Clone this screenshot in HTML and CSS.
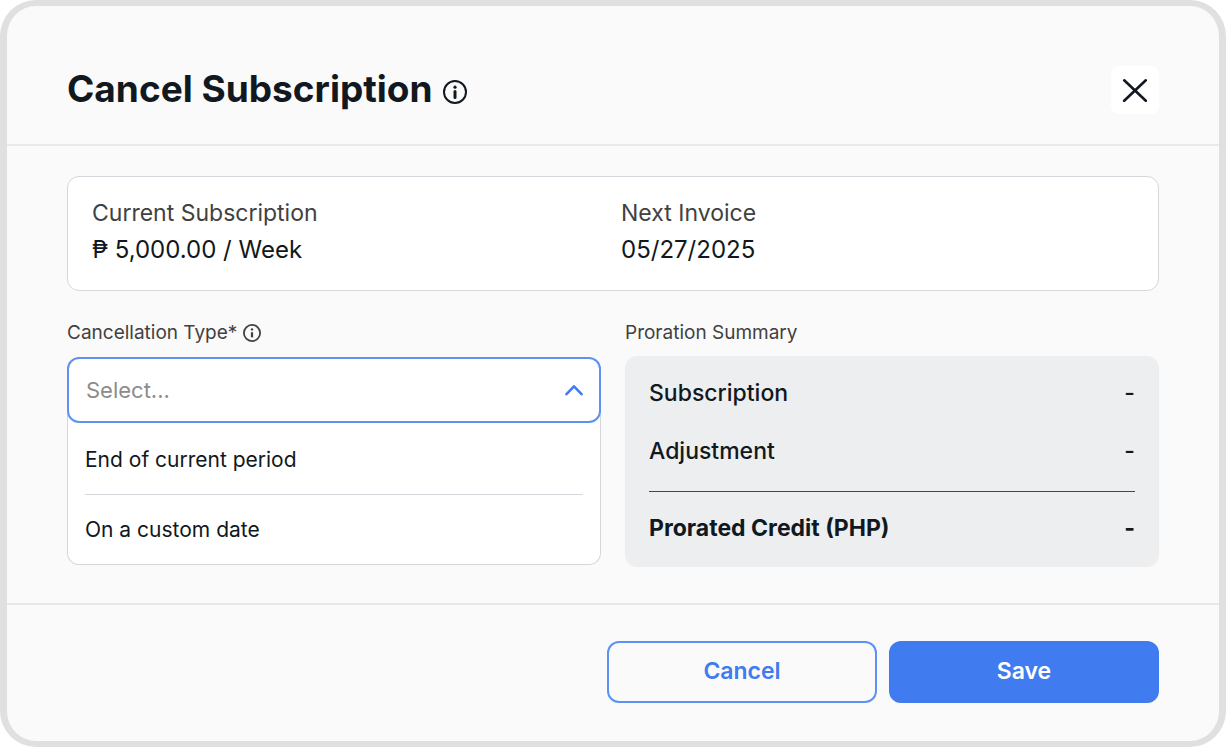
FILE: index.html
```html
<!DOCTYPE html>
<html lang="en">
<head>
<meta charset="utf-8">
<meta name="viewport" content="width=device-width, initial-scale=1">
<title>Cancel Subscription</title>
<link rel="stylesheet" href="styles.css">
</head>
<body>
<main class="dialog" role="dialog" aria-labelledby="dialog-title">
  <header class="dialog-header">
    <div class="title-group">
      <h1 class="title" id="dialog-title">Cancel Subscription</h1>
      <svg class="info-large" viewBox="0 0 24 24" aria-hidden="true"><circle cx="12" cy="12" r="11" fill="none" stroke="currentColor" stroke-width="2"/><circle cx="12" cy="7.2" r="1.6" fill="currentColor"/><path d="M12 11.6v6" stroke="currentColor" stroke-width="3" stroke-linecap="round"/></svg>
    </div>
    <button class="close" type="button" aria-label="Close">
      <svg class="close-icon" viewBox="0 0 24 24" aria-hidden="true"><path d="M1.2 2.3l21.6 20.5M22.8 2.3l-21.6 20.5" fill="none" stroke="currentColor" stroke-width="2.6" stroke-linecap="round"/></svg>
    </button>
  </header>

  <form class="dialog-form">
    <div class="dialog-body">
      <dl class="overview">
        <div class="overview-item">
          <dt class="overview-label">Current Subscription</dt>
          <dd class="overview-value">₱ 5,000.00 / Week</dd>
        </div>
        <div class="overview-item">
          <dt class="overview-label">Next Invoice</dt>
          <dd class="overview-value">05/27/2025</dd>
        </div>
      </dl>

      <div class="columns">
        <section class="column">
          <div class="label-row">
            <label for="cancel-type">Cancellation Type*</label>
            <svg class="info-small" viewBox="0 0 24 24" aria-hidden="true"><circle cx="12" cy="12" r="10.8" fill="none" stroke="currentColor" stroke-width="2.4"/><circle cx="12" cy="7.2" r="1.6" fill="currentColor"/><path d="M12 11v6.8" stroke="currentColor" stroke-width="3"/></svg>
          </div>
          <div class="dropdown">
            <div class="select-wrap">
              <select class="select" id="cancel-type">
                <option>Select...</option>
                <option>End of current period</option>
                <option>On a custom date</option>
              </select>
              <svg class="chevron" viewBox="0 0 18 12" aria-hidden="true"><path d="M1.5 10.2L9 2.4l7.5 7.8" fill="none" stroke="currentColor" stroke-width="2.6" stroke-linecap="round" stroke-linejoin="round"/></svg>
            </div>
            <ul class="menu">
              <li class="menu-item"><button class="menu-button" type="button">End of current period</button></li>
              <li class="menu-item"><button class="menu-button" type="button">On a custom date</button></li>
            </ul>
          </div>
        </section>

        <section class="column">
          <h2 class="label-row">Proration Summary</h2>
          <dl class="summary">
            <div class="summary-row"><dt>Subscription</dt><dd>-</dd></div>
            <div class="summary-row"><dt>Adjustment</dt><dd>-</dd></div>
            <div class="summary-row summary-total"><dt>Prorated Credit (PHP)</dt><dd>-</dd></div>
          </dl>
        </section>
      </div>
    </div>

    <footer class="dialog-footer">
      <button class="button button-outline" type="button">Cancel</button>
      <button class="button button-primary" type="button">Save</button>
    </footer>
  </form>
</main>
</body>
</html>
```
FILE: styles.css
```css
* {
  box-sizing: border-box;
}

body {
  margin: 0;
  background: #fff;
  color: #111820;
  font-family: Inter, "Liberation Sans", sans-serif;
}

h1, h2, dl, dd, ul {
  margin: 0;
  padding: 0;
}

button, select {
  font-family: inherit;
}

.dialog {
  display: flex;
  flex-direction: column;
  min-height: 100vh;
  border: solid #e0e0e0;
  border-width: 6px 7px;
  border-radius: 36px;
  background: #fafafa;
}

.dialog-header {
  display: flex;
  align-items: center;
  justify-content: space-between;
  padding: 60px 60px 30px;
  border-bottom: 2px solid #e7eaed;
}

.title-group {
  display: flex;
  align-items: center;
  gap: 10px;
}

.title {
  padding-bottom: 2px;
  font-size: 37px;
  line-height: 46px;
  font-weight: 650;
}

.info-large {
  width: 24px;
  height: 24px;
  margin-top: 3px;
}

.close {
  display: grid;
  place-items: center;
  width: 48px;
  height: 48px;
  padding: 0;
  border: 0;
  border-radius: 8px;
  background: #fff;
  color: #111820;
}

.close-icon {
  width: 26px;
  height: 24px;
}

.dialog-form {
  display: flex;
  flex: 1;
  flex-direction: column;
}

.dialog-body {
  padding: 30px 60px 36px;
}

.overview {
  display: grid;
  grid-template-columns: 1fr 1fr;
  gap: 16px;
  padding: 19px 24px 20px;
  border: 1px solid #d6d6dd;
  border-radius: 12px;
  background: #fff;
}

.overview-label {
  color: #414141;
  font-size: 23px;
  line-height: 34px;
}

.overview-value {
  font-size: 24px;
  line-height: 40px;
}

.columns {
  display: grid;
  grid-template-columns: 1fr 1fr;
  gap: 24px;
  margin-top: 30px;
}

.label-row {
  display: flex;
  align-items: center;
  gap: 6px;
  margin-bottom: 11px;
  color: #414141;
  font-size: 19px;
  line-height: 24px;
  font-weight: 400;
}

.info-small {
  width: 18px;
  height: 18px;
}

.dropdown {
  margin-top: 12px;
  border-radius: 12px;
  background: #fff;
}

.select-wrap {
  position: relative;
}

.select {
  display: block;
  width: 100%;
  height: 66px;
  padding: 0 17px;
  border: 2px solid #5c92f4;
  border-radius: 12px;
  background: #fff;
  color: #8c8c8c;
  font-size: 22px;
  appearance: none;
}

.chevron {
  position: absolute;
  top: 27px;
  right: 17px;
  width: 20px;
  height: 12px;
  color: #407bf0;
  pointer-events: none;
}

.menu {
  margin-top: -12px;
  padding: 14px 17px 0;
  border: 1px solid #d6d6dd;
  border-top: 0;
  border-radius: 0 0 12px 12px;
  list-style: none;
}

.menu-item + .menu-item {
  border-top: 1px solid #d6d6dd;
}

.menu-button {
  display: block;
  width: 100%;
  height: 69px;
  padding: 0;
  border: 0;
  background: transparent;
  color: #111820;
  font-size: 21px;
  text-align: left;
}

.summary {
  padding: 8px 24px 4px;
  border-radius: 12px;
  background: #edeef0;
}

.summary-row {
  display: flex;
  align-items: center;
  justify-content: space-between;
  height: 58px;
  font-size: 23px;
  font-weight: 500;
}

.summary-total {
  height: 72px;
  margin-top: 11px;
  border-top: 1px solid #3c4855;
  font-weight: 700;
}

.dialog-footer {
  display: flex;
  flex: 1;
  align-items: flex-start;
  justify-content: flex-end;
  gap: 12px;
  padding: 36px 60px 38px;
  border-top: 2px solid #e6e7ec;
}

.button {
  width: 270px;
  height: 62px;
  padding: 0 16px 2px;
  border: 2px solid #5c92f4;
  border-radius: 12px;
  font-size: 23px;
  font-weight: 600;
}

.button-outline {
  background: transparent;
  color: #407bf0;
}

.button-primary {
  border-color: #407bf0;
  background: #407bf0;
  color: #fff;
}
```
